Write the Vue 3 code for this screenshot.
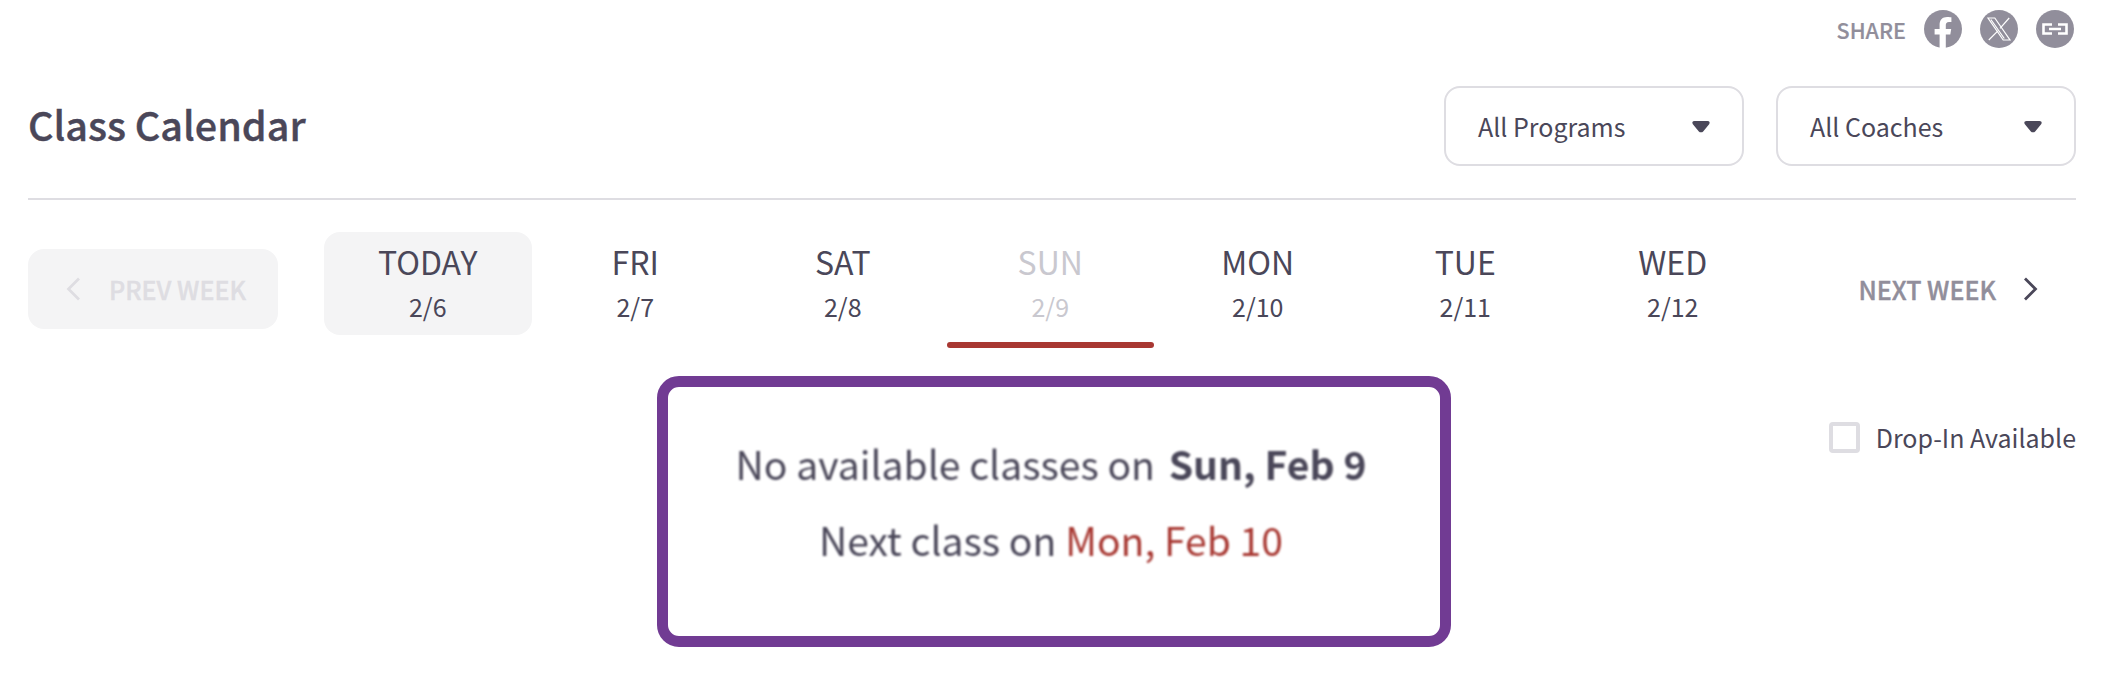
<script setup>
const days = [
  { name: 'TODAY', date: '2/6', today: true },
  { name: 'FRI', date: '2/7' },
  { name: 'SAT', date: '2/8' },
  { name: 'SUN', date: '2/9', active: true },
  { name: 'MON', date: '2/10' },
  { name: 'TUE', date: '2/11' },
  { name: 'WED', date: '2/12' },
]
const filters = ['All Programs', 'All Coaches']
</script>

<template>
  <div class="page">
    <div class="share">
      <span class="share-label">SHARE</span>
      <svg class="share-icon" viewBox="0 0 38 38">
        <circle cx="19" cy="19" r="19" fill="#918e9b" />
        <path d="M15.6 38V24.6h-5V19h5v-4.4c0-5 3-7.7 7.5-7.7 2.1 0 4.3.4 4.3.4v4.8H25c-2.4 0-3.2 1.500-3.200 3V19h5.400l-.9 5.600h-4.500V38z" fill="#fff" />
      </svg>
      <svg class="share-icon" viewBox="0 0 38 38">
        <circle cx="19" cy="19" r="19" fill="#918e9b" />
        <path d="M8 8h6.800l15.200 22h-6.800zM29.200 8 20 18.400M17.900 20.800 8.800 30M10.900 9.500l13.400 19" fill="none" stroke="#fff" stroke-width="1.200" />
      </svg>
      <svg class="share-icon" viewBox="0 0 38 38">
        <circle cx="19" cy="19" r="19" fill="#918e9b" />
        <path d="M16 14.500H7.500v9H16M22 14.500h8.500v9H22M13 19h12" fill="none" stroke="#fff" stroke-width="2.600" />
      </svg>
    </div>

    <div class="header">
      <h1>Class Calendar</h1>
      <div class="filters">
        <div v-for="f in filters" :key="f" class="select">
          <span>{{ f }}</span>
          <svg class="caret" viewBox="0 0 18 12"><path d="M3 1h12c2 0 2.500 1.500 1.500 3l-5.500 6.500c-1 1.200-3 1.200-4 0L1.500 4C.5 2.500 1 1 3 1z" fill="#4a4759" /></svg>
        </div>
      </div>
    </div>

    <div class="week">
      <button class="prev">
        <svg class="chev" viewBox="0 0 16 24"><path d="M13 1.500 2.500 12 13 22.500" fill="none" stroke="#dedde2" stroke-width="2.800" /></svg>
        <span>PREV WEEK</span>
      </button>
      <div class="days">
        <div v-for="d in days" :key="d.name" class="day" :class="{ today: d.today, active: d.active }">
          <div class="day-name">{{ d.name }}</div>
          <div class="day-date">{{ d.date }}</div>
        </div>
      </div>
      <button class="next">
        <span>NEXT WEEK</span>
        <svg class="chev" viewBox="0 0 16 24"><path d="M3 1.500 13.500 12 3 22.500" fill="none" stroke="#4a4759" stroke-width="2.800" /></svg>
      </button>
    </div>

    <div class="content">
      <div class="spacer"></div>
      <div class="empty">
        <p>No available classes on <b>Sun, Feb 9</b></p>
        <p>Next class on <em>Mon, Feb 10</em></p>
      </div>
      <label class="dropin">
        <span class="check"></span>
        <span>Drop-In Available</span>
      </label>
    </div>
  </div>
</template>

<style>
html, body { background: #fff; }
</style>

<style scoped>
.page {
  width: 2112px; height: 688px; box-sizing: border-box; padding: 10px 36px 0 28px;
  font-family: "Noto Sans CJK JP", "Noto Sans", sans-serif; color: #4a4759; overflow: hidden;
}
.share { display: flex; justify-content: flex-end; align-items: center; gap: 18px; height: 38px; padding-right: 2px; }
.share-label { font-size: 21.500px; font-weight: 500; color: #918e9b; -webkit-text-stroke: 0.2px #918e9b; }
.share-icon { width: 38px; height: 38px; }
.header { display: flex; justify-content: space-between; align-items: center; height: 152px; box-sizing: border-box; border-bottom: 2px solid #dedde2; padding-top: 6px; }
h1 { margin: 0 0 5px; font-size: 39.500px; font-weight: 500; -webkit-text-stroke: 0.4px #4a4759; }
.filters { display: flex; gap: 32px; }
.select {
  width: 300px; height: 80px; box-sizing: border-box; border: 2px solid #dedde2; border-radius: 16px;
  display: flex; align-items: center; justify-content: space-between; padding: 0 31px 0 32px; font-size: 25px;
}
.caret { width: 20px; height: 13px; }
.week { display: flex; align-items: flex-start; margin-top: 32px; }
.prev, .next {
  display: flex; align-items: center; border: 0; background: none; font: inherit; font-size: 25px; font-weight: 500; padding: 0; -webkit-text-stroke: 0.4px currentColor;
}
.prev {
  width: 250px; height: 80px; margin: 17px 45px 0 0; background: #f4f4f5; color: #dedde2; border-radius: 16px; padding-left: 38px; gap: 27px; box-sizing: border-box;
}
.next { color: #918e9b; margin: 17px 0 0 auto; height: 80px; gap: 26px; padding-right: 38px; }
.chev { width: 16px; height: 24px; }
.days { display: flex; margin-left: 1px; }
.day { width: 207.500px; height: 103px; text-align: center; position: relative; border-radius: 16px; padding-top: 7px; box-sizing: border-box; }
.day.today { background: #f4f4f5; }
.day.active { color: #c9c8cf; }
.day.active::after {
  content: ""; position: absolute; left: 0; right: 0; bottom: -13px; height: 6px; border-radius: 3px; background: #a83832;
}
.day-name { font-size: 32px; line-height: 44px; }
.day-date { font-size: 25px; line-height: 46px; }
.content { display: grid; grid-template-columns: 1fr 794px 1fr; margin-top: 41px; padding-left: 4px; }
.empty {
  height: 271px; box-sizing: border-box; border: 11px solid #713b93; border-radius: 22px;
  display: flex; flex-direction: column; justify-content: center; align-items: center; gap: 28px; padding: 0 6px 22px 0;
}
.empty p { margin: 0; font-size: 39.100px; line-height: 48px; filter: blur(0.8px); }
.empty b { font-weight: 700; margin-left: 5px; }
.empty em { font-style: normal; color: #a83832; }
.dropin { display: flex; align-items: center; justify-content: flex-end; gap: 16px; font-size: 25px; height: 32px; margin-top: 45px; }
.check { width: 31px; height: 31px; box-sizing: border-box; border: 4px solid #dedde2; border-radius: 4px; }
</style>
